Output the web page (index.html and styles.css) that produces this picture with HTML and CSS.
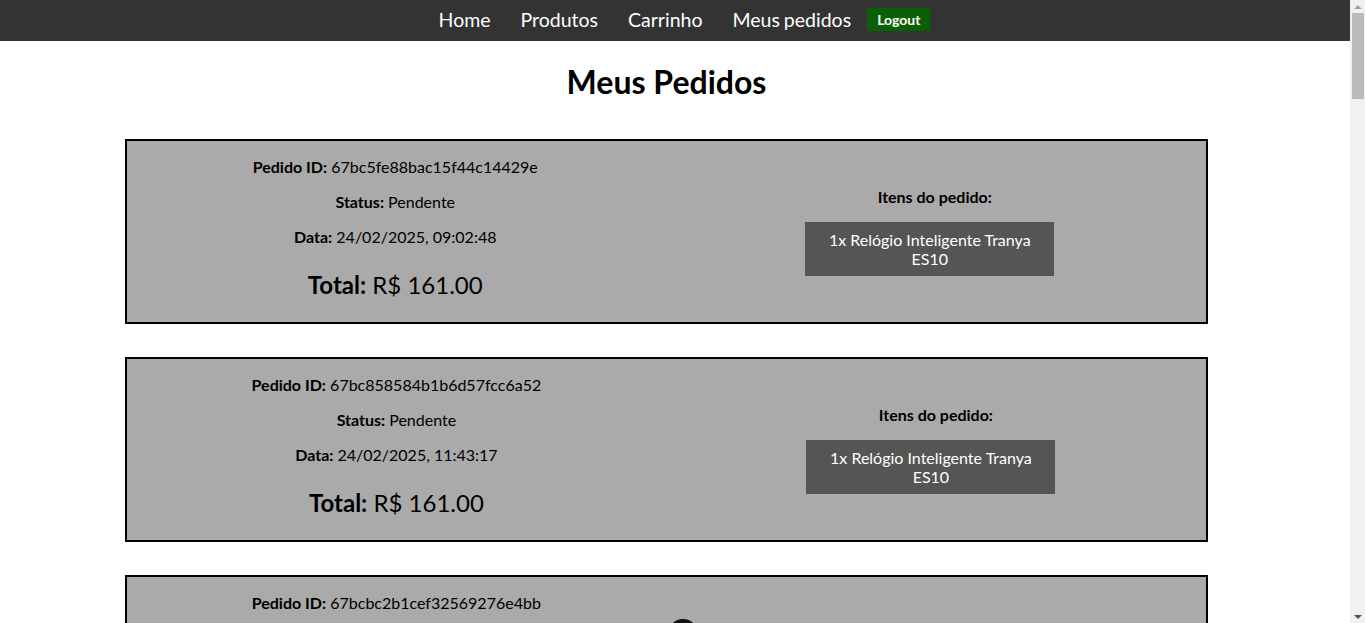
FILE: index.html
```html
<!DOCTYPE html>
<html lang="pt-BR">
<head>
<meta charset="utf-8">
<title>Meus Pedidos</title>
<link rel="stylesheet" href="styles.css">
</head>
<body>
<nav class="navbar">
  <a class="nav-link" href="#">Home</a>
  <a class="nav-link" href="#">Produtos</a>
  <a class="nav-link" href="#">Carrinho</a>
  <a class="nav-link nav-link-tight" href="#">Meus pedidos</a>
  <button class="logout">Logout</button>
</nav>
<main class="page">
  <h1 class="title">Meus Pedidos</h1>
  <div class="orders">
    <section class="order">
      <div class="order-info">
        <p><strong>Pedido ID:</strong> 67bc5fe88bac15f44c14429e</p>
        <p><strong>Status:</strong> Pendente</p>
        <p><strong>Data:</strong> 24/02/2025, 09:02:48</p>
        <h2 class="total"><strong>Total:</strong> <span>R$ 161.00</span></h2>
      </div>
      <div class="order-items">
        <p class="items-title">Itens do pedido:</p>
        <ul class="items">
          <li class="item">1x Relógio Inteligente Tranya ES10</li>
        </ul>
      </div>
    </section>
    <section class="order">
      <div class="order-info">
        <p><strong>Pedido ID:</strong> 67bc858584b1b6d57fcc6a52</p>
        <p><strong>Status:</strong> Pendente</p>
        <p><strong>Data:</strong> 24/02/2025, 11:43:17</p>
        <h2 class="total"><strong>Total:</strong> <span>R$ 161.00</span></h2>
      </div>
      <div class="order-items">
        <p class="items-title">Itens do pedido:</p>
        <ul class="items">
          <li class="item">1x Relógio Inteligente Tranya ES10</li>
        </ul>
      </div>
    </section>
    <section class="order">
      <div class="order-info">
        <p><strong>Pedido ID:</strong> 67bcbc2b1cef32569276e4bb</p>
        <p><strong>Status:</strong> Pendente</p>
        <p><strong>Data:</strong> 24/02/2025, 15:36:59</p>
        <h2 class="total"><strong>Total:</strong> <span>R$ 161.00</span></h2>
      </div>
      <div class="order-items">
        <p class="items-title">Itens do pedido:</p>
        <ul class="items">
          <li class="item">1x Relógio Inteligente Tranya ES10</li>
        </ul>
      </div>
      <div class="float-dot"></div>
    </section>
  </div>
</main>
<div class="scrollbar" aria-hidden="true">
  <div class="sb-arrow sb-up"></div>
  <div class="sb-track"><div class="sb-thumb"></div></div>
  <div class="sb-arrow sb-down"></div>
</div>
</body>
</html>
```
FILE: styles.css
```css
html, body {
  margin: 0;
  padding: 0;
}
body {
  font-family: Lato, "Liberation Sans", sans-serif;
  color: #000;
  background: #fff;
  margin-right: 15px;
}
.navbar {
  height: 41px;
  background: #333333;
  display: flex;
  align-items: center;
  justify-content: center;
  gap: 30px;
  padding-left: 19px;
}
.nav-link {
  color: #fff;
  text-decoration: none;
  font-size: 19.5px;
  margin-bottom: 2px;
}
.nav-link-tight {
  word-spacing: -1px;
}
.logout {
  margin-left: -14px;
  margin-bottom: 2px;
  background: #0b6006;
  color: #fff;
  border: none;
  font-family: Lato, "Liberation Sans", sans-serif;
  font-weight: bold;
  font-size: 14px;
  height: 23px;
  padding: 0 10px;
}
.page {
  padding: 0 142px 60px 125px;
}
.title {
  text-align: center;
  font-size: 32px;
  margin: 21px 0 38px;
}
.orders {
  display: flex;
  flex-direction: column;
  gap: 33px;
}
.order {
  position: relative;
  border: 2px solid #000;
  background: #aaaaaa;
  display: flex;
  justify-content: space-around;
  align-items: center;
}
.order-info {
  text-align: center;
  font-size: 16px;
}
.order-info p {
  margin: 16px 0;
}
.total {
  font-size: 24px;
  font-weight: normal;
  margin: 24px 0 23px;
}
.order-items {
  width: 291px;
  text-align: center;
}
.items-title {
  font-weight: bold;
  margin: 15px 0 16px;
}
.items {
  list-style: none;
  margin: 0 0 16px;
  padding: 0;
}
.item {
  margin-left: 16px;
  width: 249px;
  box-sizing: border-box;
  background: #555555;
  color: #fff;
  padding: 8px 10px;
  text-align: center;
}
.float-dot {
  position: absolute;
  left: 541px;
  top: 42px;
  width: 30px;
  height: 30px;
  border-radius: 50%;
  background: #111;
}
.scrollbar {
  position: fixed;
  top: 0;
  right: 0;
  width: 15px;
  height: 100vh;
  background: #f1f1f1;
  display: flex;
  flex-direction: column;
}
.sb-arrow {
  height: 13px;
  display: flex;
  align-items: center;
  justify-content: center;
}
.sb-up::before {
  content: "";
  border-left: 4px solid transparent;
  border-right: 4px solid transparent;
  border-bottom: 4px solid #a3a3a3;
}
.sb-down::before {
  content: "";
  border-left: 4px solid transparent;
  border-right: 4px solid transparent;
  border-top: 4px solid #505050;
}
.sb-track {
  flex: 1;
  padding: 0 1px 0 2px;
}
.sb-thumb {
  height: 86px;
  background: #bcbcbc;
}
```
